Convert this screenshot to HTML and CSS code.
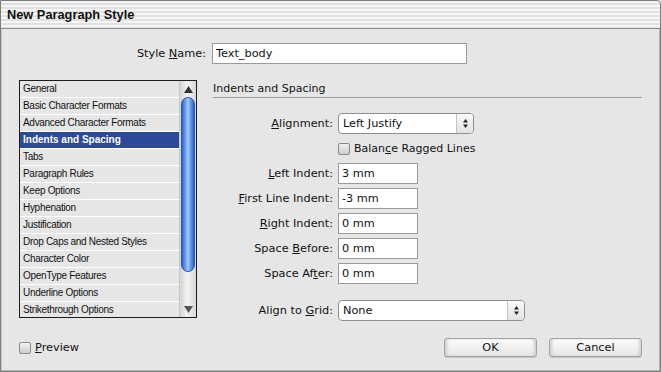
FILE: index.html
```html
<!DOCTYPE html>
<html lang="en">
<head>
  <meta charset="UTF-8" />
  <title>New Paragraph Style</title>
  <link rel="stylesheet" href="styles.css">
</head>
<body>

  <div class="dialog">
    <div class="titlebar">New Paragraph Style</div>

    <div class="content">
      <div class="name-row">
        <label class="name-label" for="styleName">Style <u>N</u>ame:</label>
        <input type="text" id="styleName" class="field name-field" value="Text_body" />
      </div>

      <div class="main">
        <div class="listbox">
          <ul class="items">
            <li>General</li>
            <li>Basic Character Formats</li>
            <li>Advanced Character Formats</li>
            <li class="selected">Indents and Spacing</li>
            <li>Tabs</li>
            <li>Paragraph Rules</li>
            <li>Keep Options</li>
            <li>Hyphenation</li>
            <li>Justification</li>
            <li>Drop Caps and Nested Styles</li>
            <li>Character Color</li>
            <li>OpenType Features</li>
            <li>Underline Options</li>
            <li>Strikethrough Options</li>
          </ul>
          <div class="scrollbar">
            <div class="sb-btn">
              <svg width="9" height="7" viewBox="0 0 9 7"><path d="M4.5 0 L9 7 L0 7 Z" fill="#333"/></svg>
            </div>
            <div class="sb-track">
              <div class="sb-thumb"></div>
            </div>
            <div class="sb-btn">
              <svg width="9" height="7" viewBox="0 0 9 7"><path d="M0 0 L9 0 L4.5 7 Z" fill="#555"/></svg>
            </div>
          </div>
        </div>

        <section class="panel">
          <h2 class="panel-title">Indents and Spacing</h2>

          <div class="form">
            <label class="lbl"><u>A</u>lignment:</label>
            <div class="select select-short">
              <span>Left Justify</span>
              <span class="arrows">
                <svg width="7" height="11" viewBox="0 0 7 11"><path d="M3.5 1 L6 4.5 L1 4.5 Z M1 6.5 L6 6.5 L3.5 10 Z" fill="#222"/></svg>
              </span>
            </div>

            <span></span>
            <label class="check"><span class="box"></span><span>Balan<u>c</u>e Ragged Lines</span></label>

            <label class="lbl"><u>L</u>eft Indent:</label>
            <input type="text" class="field num" value="3 mm" />

            <label class="lbl"><u>F</u>irst Line Indent:</label>
            <input type="text" class="field num" value="-3 mm" />

            <label class="lbl"><u>R</u>ight Indent:</label>
            <input type="text" class="field num" value="0 mm" />

            <label class="lbl">Space <u>B</u>efore:</label>
            <input type="text" class="field num" value="0 mm" />

            <label class="lbl">Space Af<u>t</u>er:</label>
            <input type="text" class="field num" value="0 mm" />

            <label class="lbl grid-gap">Align to <u>G</u>rid:</label>
            <div class="select select-long grid-gap">
              <span>None</span>
              <span class="arrows">
                <svg width="7" height="11" viewBox="0 0 7 11"><path d="M3.5 1 L6 4.5 L1 4.5 Z M1 6.5 L6 6.5 L3.5 10 Z" fill="#222"/></svg>
              </span>
            </div>
          </div>
        </section>
      </div>

      <div class="footer">
        <label class="check preview"><span class="box"></span><span><u>P</u>review</span></label>
        <div class="buttons">
          <button class="btn">OK</button>
          <button class="btn">Cancel</button>
        </div>
      </div>
    </div>
  </div>

</body>
</html>
```

FILE: styles.css
```css
/* Reset & Base */
* { box-sizing: border-box; margin: 0; padding: 0; }
body {
  font-family: 'DejaVu Sans', Tahoma, Verdana, sans-serif;
  font-size: 11px;
  color: #111;
  background: #e6e6e6;
}
u { text-decoration: underline; text-underline-offset: 1px; }

/* Window */
.dialog {
  width: 661px;
  height: 372px;
  background: #e6e6e6;
  border: 1px solid #7c7c7c;
  border-top-right-radius: 4px;
  box-shadow: inset -1px -1px 0 #b4b4b4, inset 1px 0 0 #c8c8c8;
}
.titlebar {
  height: 28px;
  line-height: 27px;
  padding-left: 6px;
  font-family: 'Liberation Sans', Arial, sans-serif;
  font-weight: 700;
  font-size: 12.8px;
  color: #111;
  border-bottom: 1px solid #8c8c8c;
  border-top-right-radius: 4px;
  background: repeating-linear-gradient(to bottom, #f6f6f6 0, #f6f6f6 2px, #e0e0e0 2px, #e0e0e0 4px);
}

.content {
  padding: 14px 18px 0 18px;
}

/* Style name */
.name-row {
  display: flex;
  align-items: center;
  gap: 6px;
}
.name-label {
  width: 187px;
  text-align: right;
  font-size: 11.3px;
}
.field {
  height: 21px;
  border: 1px solid #9a9a9a;
  background: #fff;
  font-family: inherit;
  font-size: 11.3px;
  color: #111;
  padding: 0 3px;
  outline: none;
}
.name-field { width: 255px; }

/* Main area */
.main {
  display: flex;
  margin-top: 16px;
}

/* List box */
.listbox {
  width: 178px;
  height: 238px;
  display: flex;
  border: 1px solid #1c1c1c;
  background: #e6e6e6;
}
.items {
  flex: 1;
  list-style: none;
}
.items li {
  height: 17px;
  line-height: 16px;
  padding-left: 3px;
  border-bottom: 1px solid #fff;
  font-family: 'Liberation Sans', Arial, sans-serif;
  font-size: 10px;
  letter-spacing: -0.3px;
  white-space: nowrap;
  overflow: hidden;
}
.items li:last-child { border-bottom: none; }
.items li.selected {
  background: #2b4a98;
  color: #fff;
  font-weight: 700;
  letter-spacing: 0;
}

.scrollbar {
  width: 17px;
  display: flex;
  flex-direction: column;
  border-left: 1px solid #c8c8c8;
  background: linear-gradient(to right, #d4d4d4, #f2f2f2 45%, #d8d8d8);
}
.sb-btn {
  height: 16px;
  display: flex;
  align-items: center;
  justify-content: center;
}
.sb-track {
  flex: 1;
  padding: 0 1px;
}
.sb-thumb {
  height: 175px;
  border-radius: 7px;
  border: 1px solid #2a58b8;
  background: linear-gradient(to right, #2f62cc, #6d9ff0 30%, #a8cbf8 50%, #5f90e8 75%, #2d5fc8);
}

/* Right panel */
.panel {
  margin-left: 16px;
  flex: 1;
}
.panel-title {
  height: 18px;
  font-size: 11px;
  font-weight: 400;
  line-height: 18px;
  border-bottom: 1px solid #9c9c9c;
  color: #111;
}

.form {
  display: grid;
  grid-template-columns: 120px auto;
  column-gap: 5px;
  row-gap: 4px;
  margin-top: 15px;
  align-items: center;
  justify-items: start;
}
.lbl {
  justify-self: end;
  font-size: 11.3px;
  white-space: nowrap;
}
.num { width: 80px; }
.grid-gap { margin-top: 12px; }

.select {
  height: 21px;
  display: flex;
  align-items: center;
  border: 1px solid #8e8e8e;
  border-radius: 4px;
  background: #fff;
  font-size: 11.3px;
  padding-left: 4px;
}
.select span:first-child { flex: 1; }
.select-short { width: 136px; }
.select-long { width: 187px; }
.arrows {
  width: 17px;
  height: 100%;
  display: flex;
  align-items: center;
  justify-content: center;
  border-left: 1px solid #c4c4c4;
  border-radius: 0 3px 3px 0;
  background: linear-gradient(#fafafa, #e2e2e2);
}

.check {
  height: 21px;
  display: flex;
  align-items: center;
  gap: 4px;
  font-size: 11px;
}
.box {
  width: 12px;
  height: 12px;
  border: 1px solid #8a8a8a;
  border-radius: 2px;
  background: linear-gradient(#f2f2f2, #cdcdcd);
}

/* Footer */
.footer {
  margin-top: 16px;
  display: flex;
  align-items: center;
  justify-content: space-between;
}
.preview { font-size: 11.3px; }
.buttons {
  display: flex;
  gap: 12px;
}
.btn {
  width: 93px;
  height: 19px;
  border: 1px solid #a2a2a2;
  border-radius: 3px;
  font-family: inherit;
  font-size: 11.3px;
  color: #111;
  background: linear-gradient(#fbfbfb, #e6e6e6);
  box-shadow: inset 3px 0 3px -1px #cfcfcf, inset -3px 0 3px -1px #cfcfcf, 0 1px 0 #c4c4c4;
}
```
